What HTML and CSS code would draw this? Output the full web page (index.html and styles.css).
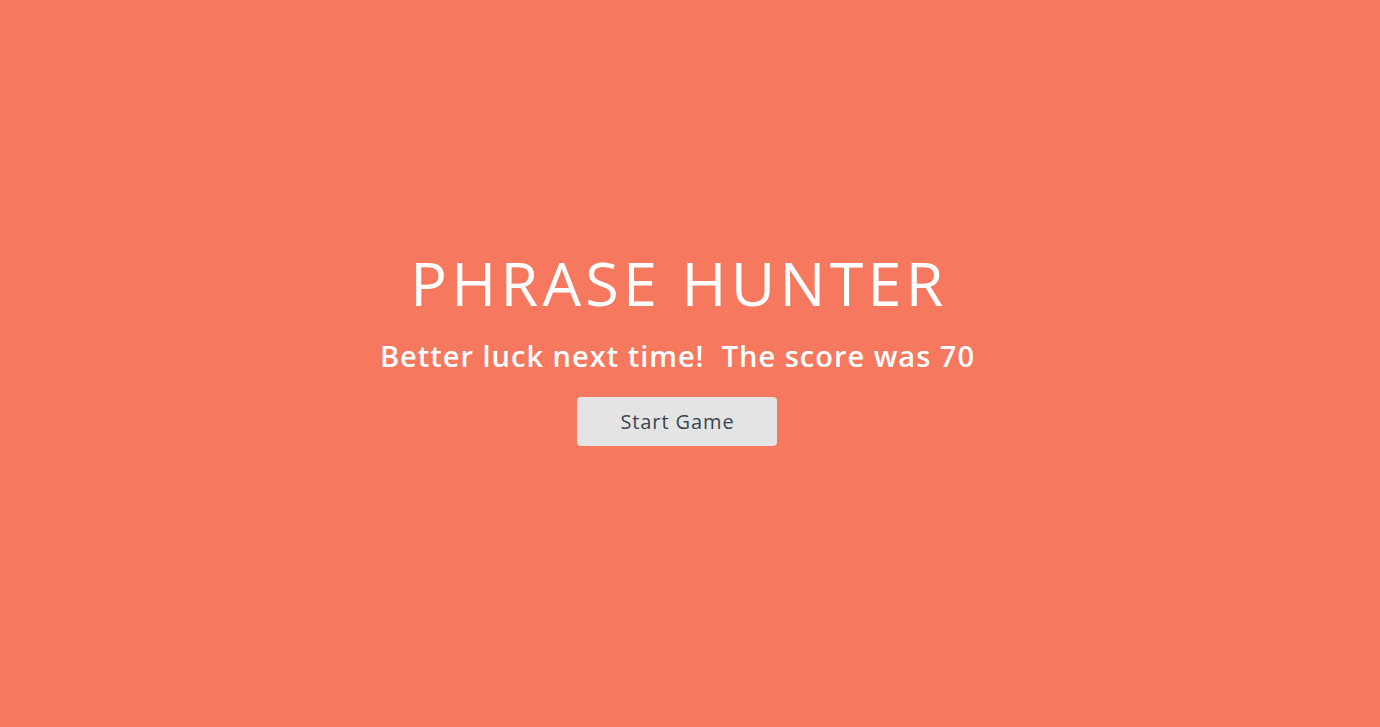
FILE: index.html
```html
<!DOCTYPE html>
<html lang="en">
<head>
<meta charset="utf-8">
<title>Phrase Hunter</title>
<link rel="stylesheet" href="styles.css">
</head>
<body>
<div class="overlay">
  <h2 class="title">PHRASE HUNTER</h2>
  <h1 class="message">Better luck next time!&nbsp; The score was 70</h1>
  <button class="btn-reset">Start Game</button>
</div>
</body>
</html>
```

FILE: styles.css
```css
html, body {
  margin: 0;
  padding: 0;
  height: 100%;
}
body {
  background: #f5785f;
  font-family: "Open Sans", "DejaVu Sans", sans-serif;
}
.overlay {
  box-sizing: border-box;
  height: 727px;
  padding-right: 26px;
  display: flex;
  flex-direction: column;
  align-items: center;
  padding-top: 248px;
}
.title {
  margin: 0;
  padding-left: 4px;
  color: #fff;
  font-weight: 400;
  font-size: 61px;
  line-height: 70px;
  letter-spacing: 4.3px;
}
.message {
  margin: 18px 0 0;
  padding-left: 1px;
  color: #fff;
  font-weight: 600;
  font-size: 29px;
  line-height: 40px;
  letter-spacing: 1px;
}
.btn-reset {
  margin-top: 21px;
  width: 200px;
  height: 49px;
  border: none;
  border-radius: 4px;
  background: #e4e4e4;
  color: #3a4550;
  font-family: inherit;
  font-size: 20px;
  letter-spacing: 0.9px;
  padding: 0 0 0 1px;
}
```
